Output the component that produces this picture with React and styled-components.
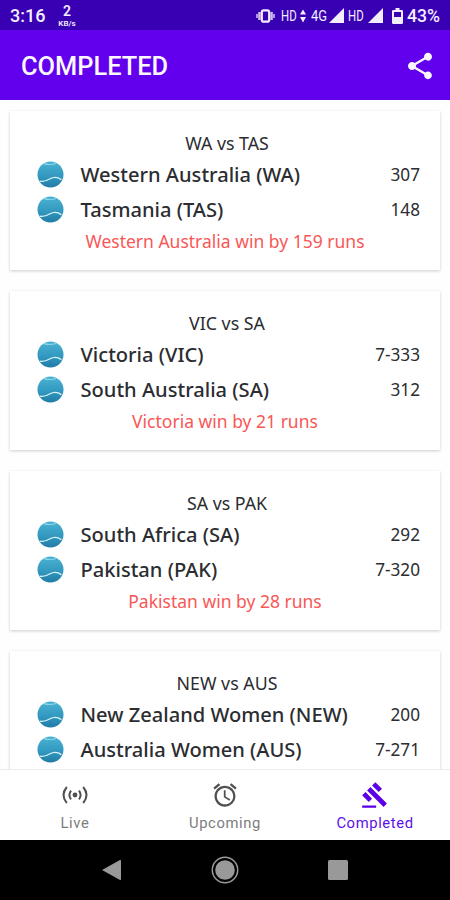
import React from 'react'
import styled, {createGlobalStyle} from 'styled-components'
import {MdShare, MdGavel, MdAlarm} from 'react-icons/md'

const GlobalStyle = createGlobalStyle`
  * {
    box-sizing: border-box;
  }
  body {
    margin: 0;
    overflow: hidden;
    background: #fff;
  }
`

const Screen = styled.div`
  width: 450px;
  height: 900px;
  display: flex;
  flex-direction: column;
  overflow: hidden;
  background: #fefefe;
  font-family: Roboto, sans-serif;
`

const StatusBar = styled.div`
  flex: none;
  height: 30px;
  padding: 2px 8px 0 10px;
  display: flex;
  align-items: center;
  color: #f3eeff;
  background: #3900b3;
`

const Clock = styled.span`
  width: 47px;
  font-size: 18px;
  font-weight: 500;
  line-height: 28px;
`

const Speed = styled.div`
  width: 20px;
  display: flex;
  flex-direction: column;
  align-items: center;
  font-size: 14px;
  font-weight: 600;
  line-height: 15px;
  small {
    font-size: 8px;
    line-height: 9px;
  }
`

const StatusIcons = styled.svg`
  flex: none;
  margin-left: ${({$left}) => $left || 0}px;
`

const NetLabel = styled.span`
  width: ${({$width}) => $width}px;
  margin-left: ${({$left}) => $left || 0}px;
  font-size: 15px;
  line-height: 28px;
  transform: scaleX(${({$squeeze}) => $squeeze || 0.8});
  transform-origin: left;
  white-space: nowrap;
`

const Battery = styled.span`
  margin-left: 4px;
  font-size: 17.6px;
  font-weight: 500;
  line-height: 28px;
`

const Header = styled.header`
  flex: none;
  height: 70px;
  padding: 2px 14px 0 21px;
  display: flex;
  align-items: center;
  justify-content: space-between;
  color: #fbf7ff;
  background: #6200ee;
`

const Title = styled.h1`
  margin: 0;
  font-size: 25.4px;
  font-weight: 500;
`

const MatchList = styled.main`
  flex: 1;
  min-height: 0;
  padding: 11px 10px 0;
  display: flex;
  flex-direction: column;
  gap: 21px;
  overflow: hidden;
  font-family: 'Noto Sans', sans-serif;
`

const Card = styled.section`
  flex: none;
  height: 159px;
  padding: 19px 20px 0 27px;
  background: #fff;
  box-shadow: 0 1px 3px rgba(0, 0, 0, 0.2);
  color: #2b2d31;
`

const Versus = styled.div`
  margin-left: -7px;
  margin-bottom: 1px;
  padding-left: 4px;
  font-size: 17.8px;
  line-height: 26px;
  text-align: center;
`

const Team = styled.div`
  height: 35px;
  display: flex;
  align-items: center;
`

const TeamName = styled.span`
  flex: 1;
  margin-left: 16.5px;
  font-size: 20.1px;
  line-height: 28px;
  font-weight: 500;
  white-space: nowrap;
`

const Score = styled.span`
  font-size: 17.2px;
`

const Result = styled.div`
  margin-left: -7px;
  font-size: 17.5px;
  line-height: 28px;
  text-align: center;
  color: #f95757;
`

const Tabs = styled.nav`
  flex: none;
  height: 71px;
  display: flex;
  background: #fff;
  border-top: 1px solid #ececec;
`

const Tab = styled.div`
  width: 150px;
  padding-top: 11px;
  display: flex;
  flex-direction: column;
  align-items: center;
  font-size: 14.8px;
  line-height: 18px;
  letter-spacing: 0.6px;
  color: ${({$active}) => ($active ? '#5b10e8' : '#7d7d7d')};
  svg {
    margin-bottom: 5px;
    color: ${({$active}) => ($active ? '#5b00e6' : '#505050')};
  }
`

const SystemBar = styled.div`
  flex: none;
  height: 60px;
  display: flex;
  align-items: center;
  justify-content: center;
  gap: 89px;
  background: #000;
`

const matches = [
    {
        title: 'WA vs TAS',
        teams: [['Western Australia (WA)', '307'], ['Tasmania (TAS)', '148']],
        result: 'Western Australia win by 159 runs'
    },
    {
        title: 'VIC vs SA',
        teams: [['Victoria (VIC)', '7-333'], ['South Australia (SA)', '312']],
        result: 'Victoria win by 21 runs'
    },
    {
        title: 'SA vs PAK',
        teams: [['South Africa (SA)', '292'], ['Pakistan (PAK)', '7-320']],
        result: 'Pakistan win by 28 runs'
    },
    {
        title: 'NEW vs AUS',
        teams: [['New Zealand Women (NEW)', '200'], ['Australia Women (AUS)', '7-271']]
    }
]

function Ball() {
    return (
        <svg width="27" height="27" viewBox="0 0 27 27">
            <defs>
                <linearGradient id="ball" x1="0" y1="0" x2="0" y2="1">
                    <stop offset="0" stopColor="#4ab3d2" />
                    <stop offset="0.55" stopColor="#3399c1" />
                    <stop offset="1" stopColor="#217ca6" />
                </linearGradient>
            </defs>
            <circle cx="13.5" cy="13.5" r="13" fill="url(#ball)" />
            <path d="M7 2.6Q13 4.4 19 2.4" fill="none" stroke="#8fd6e8" strokeWidth="1.1" />
            <path d="M3 20.2C7 21 10 19.6 13 17.8S20 15.4 24.4 18.6" fill="none" stroke="#d8f3f5" strokeWidth="1.3" />
        </svg>
    )
}

function Signal() {
    return <path d="M0 15L15 0V15Z" fill="currentColor" />
}

function LiveIcon() {
    return (
        <svg width="28" height="28" viewBox="0 0 28 28" fill="none" stroke="currentColor" strokeWidth="2">
            <circle cx="14" cy="14" r="2.4" fill="currentColor" stroke="none" />
            <path d="M10 9.6Q6.8 14 10 18.4M18 9.6Q21.2 14 18 18.4" />
            <path d="M5.8 6Q-.8 14 5.8 22M22.2 6Q28.8 14 22.2 22" />
        </svg>
    )
}

function PhoneStatus() {
    return (
        <StatusBar>
            <Clock>3:16</Clock>
            <Speed>2<small>KB/s</small></Speed>
            <StatusIcons $left={179} width="19" height="14" viewBox="0 0 19 14" fill="none" stroke="currentColor">
                <rect x="5.8" y="1.3" width="7.4" height="11.4" rx="2" strokeWidth="2.2" />
                <path d="M3.4 3V11M15.6 3V11" strokeWidth="2.4" opacity="0.8" />
                <path d="M1 5V9M18 5V9" strokeWidth="1.8" opacity="0.7" />
            </StatusIcons>
            <NetLabel $left={6} $width={18} $squeeze={0.76}>HD</NetLabel>
            <StatusIcons width="8" height="14" viewBox="0 0 8 14">
                <path d="M4 .5L7 5.5H1ZM4 13.5L1 8H7Z" fill="currentColor" />
            </StatusIcons>
            <NetLabel $left={4} $width={18} $squeeze={0.86}>4G</NetLabel>
            <StatusIcons width="16" height="16" viewBox="0 0 16 16"><Signal /></StatusIcons>
            <NetLabel $left={3} $width={20} $squeeze={0.76}>HD</NetLabel>
            <StatusIcons width="16" height="16" viewBox="0 0 16 16"><Signal /></StatusIcons>
            <StatusIcons $left={8} width="11" height="16" viewBox="0 0 11 16">
                <path fillRule="evenodd" d="M3.5 0H7.5V2H9.6Q11 2 11 3.3V14.7Q11 16 9.6 16H1.4Q0 16 0 14.7V3.3Q0 2 1.4 2H3.5ZM2 4V9H9V4Z" fill="currentColor" />
            </StatusIcons>
            <Battery>43%</Battery>
        </StatusBar>
    )
}

function MatchCard({match}) {
    return (
        <Card>
            <Versus>{match.title}</Versus>
            {match.teams.map(([name, score]) => (
                <Team key={name}>
                    <Ball />
                    <TeamName>{name}</TeamName>
                    <Score>{score}</Score>
                </Team>
            ))}
            <Result>{match.result}</Result>
        </Card>
    )
}

function App() {
    return (
        <Screen>
            <GlobalStyle />
            <PhoneStatus />
            <Header>
                <Title>COMPLETED</Title>
                <MdShare size={32} />
            </Header>
            <MatchList>
                {matches.map(match => <MatchCard key={match.title} match={match} />)}
            </MatchList>
            <Tabs>
                <Tab><LiveIcon />Live</Tab>
                <Tab><MdAlarm size={28} />Upcoming</Tab>
                <Tab $active><MdGavel size={28} />Completed</Tab>
            </Tabs>
            <SystemBar>
                <svg width="20" height="22" viewBox="0 0 20 22"><path d="M0 11L18 1Q19 .5 19 2V20Q19 21.5 18 21Z" fill="#999" /></svg>
                <svg width="28" height="28" viewBox="0 0 28 28">
                    <circle cx="14" cy="14" r="12.7" fill="none" stroke="#999" strokeWidth="1.5" />
                    <circle cx="14" cy="14" r="9.8" fill="#999" />
                </svg>
                <svg width="20" height="20" viewBox="0 0 20 20"><rect width="20" height="20" rx="1.5" fill="#999" /></svg>
            </SystemBar>
        </Screen>
    )
}

export default App
